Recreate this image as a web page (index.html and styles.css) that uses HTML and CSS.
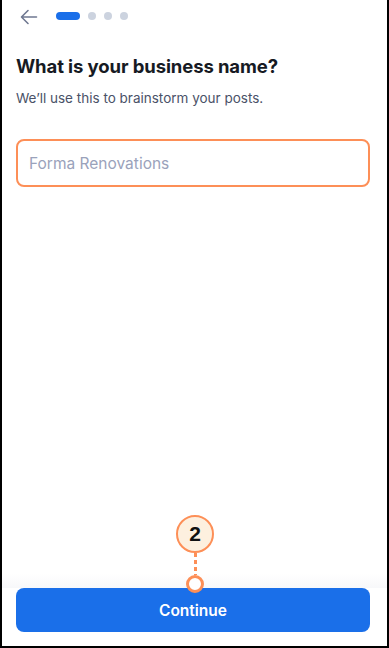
FILE: index.html
```html
<!DOCTYPE html>
<html>
<head>
<meta charset="utf-8">
<link rel="stylesheet" href="styles.css">
</head>
<body>
<div class="frame">
  <div class="topbar">
    <svg class="back" width="18" height="16" viewBox="0 0 18 16"><path d="M16.5 8H2M8 1.5L1.5 8L8 14.5" fill="none" stroke="#6f7891" stroke-width="1.6" stroke-linecap="round" stroke-linejoin="round"/></svg>
    <div class="steps">
      <span class="step active"></span>
      <span class="step"></span>
      <span class="step"></span>
      <span class="step"></span>
    </div>
  </div>
  <div class="content">
    <h1 class="title">What is your business name?</h1>
    <p class="subtitle">We’ll use this to brainstorm your posts.</p>
    <div class="field"><span class="placeholder">Forma Renovations</span></div>
  </div>
  <div class="footer">
    <div class="callout">
      <div class="badge">2</div>
      <div class="dash"></div>
      <div class="pin"></div>
    </div>
    <button class="cta">Continue</button>
  </div>
</div>
</body>
</html>
```
FILE: styles.css
```css
* { box-sizing: border-box; }
html, body { margin: 0; padding: 0; background: #fff; }
body { font-family: "Inter", "Noto Sans", sans-serif; }
.frame {
  width: 389px;
  height: 648px;
  border-left: 2px solid #000;
  border-right: 2px solid #000;
  border-bottom: 2px solid #000;
  display: flex;
  flex-direction: column;
  background: #fff;
}
.topbar {
  display: flex;
  align-items: center;
  height: 32px;
  padding-left: 18px;
}
.back { display: block; margin-top: 1px; }
.steps { display: flex; gap: 8px; margin-left: 18px; }
.step { width: 8px; height: 8px; border-radius: 4px; background: #ccd3df; }
.step.active { width: 24px; background: #1a6fe9; }
.content { padding: 0 17px 0 14px; flex: 1; }
.title {
  margin: 22px 0 0;
  font-size: 18.5px;
  font-weight: 700;
  color: #161a23;
  line-height: 24px;
  letter-spacing: -0.1px;
}
.subtitle {
  margin: 11px 0 0;
  font-size: 13.5px;
  color: #4a5268;
  line-height: 18px;
}
.field {
  margin-top: 32px;
  height: 48px;
  border: 2px solid #fd8f57;
  border-radius: 8px;
  display: flex;
  align-items: center;
  padding-left: 11px;
}
.placeholder { font-size: 15.5px; color: #9aa2bb; }
.footer {
  position: relative;
  padding: 0 17px 14px 14px;
  background: #fff;
}
.footer::before {
  content: "";
  position: absolute;
  left: 0; right: 0; top: -14px; height: 14px;
  background: linear-gradient(to bottom, rgba(242,243,246,0), rgba(242,243,246,0.6));
}
.callout {
  position: absolute;
  left: 173px;
  top: -73px;
  width: 40px;
  display: flex;
  flex-direction: column;
  align-items: center;
  z-index: 2;
}
.badge {
  width: 38px; height: 38px;
  border-radius: 50%;
  border: 2px solid #fd8f57;
  background: #fdf0df;
  display: flex; align-items: center; justify-content: center;
  font-family: "Liberation Sans", Arial, sans-serif;
  font-weight: 700; font-size: 21px; color: #111;
}
.dash {
  width: 3px; height: 22px;
  background: repeating-linear-gradient(to bottom, #fd8f57 0 4px, transparent 4px 7px);
}
.pin {
  width: 18px; height: 18px; border-radius: 50%;
  border: 3px solid #fd8f57; background: #fff;
}
.cta {
  position: relative;
  display: block;
  width: 100%;
  height: 44px;
  border: 0;
  border-radius: 8px;
  background: #1a6fe9;
  color: #fff;
  font-family: "Inter", "Noto Sans", sans-serif;
  font-size: 15.5px;
  font-weight: 600;
}
```
